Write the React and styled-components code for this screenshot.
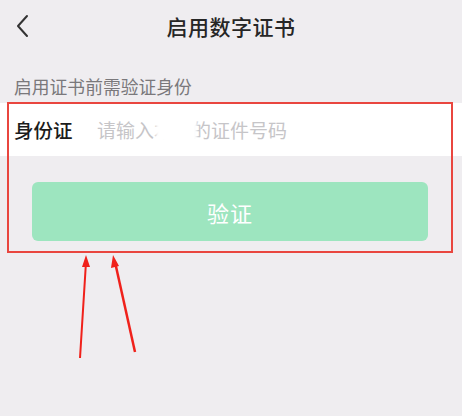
import React from "react";
import styled, {createGlobalStyle} from "styled-components";

const GlobalStyle = createGlobalStyle`
	html, body {
		margin: 0;
		padding: 0;
		background: #efedf0;
		font-family: "Noto Sans CJK SC", "Noto Sans", sans-serif;
	}
`;

const Page = styled.div`
	position: relative;
	width: 462px;
	height: 416px;
	overflow: hidden;
	background: #efedf0;
`;

const Header = styled.div`
	position: relative;
	height: 52px;
	display: flex;
	align-items: center;
	justify-content: center;
`;

const Back = styled.button`
	position: absolute;
	left: 12px;
	top: 12px;
	width: 20px;
	height: 28px;
	padding: 0;
	border: none;
	background: none;
	display: flex;
	align-items: center;
	justify-content: center;
`;

const Title = styled.h1`
	margin: 0;
	font-size: 21px;
	font-weight: 500;
	color: #262626;
	letter-spacing: 0.5px;
`;

const Hint = styled.div`
	height: 51px;
	box-sizing: border-box;
	padding: 22px 0 0 14px;
	font-size: 17.8px;
	color: #7a787b;
	line-height: 24px;
`;

const Field = styled.div`
	height: 53px;
	background: #ffffff;
	display: flex;
	align-items: center;
	padding-left: 14px;
`;

const Label = styled.span`
	width: 83px;
	flex-shrink: 0;
	font-size: 19.5px;
	font-weight: 500;
	color: #1c1c1c;
`;

const InputWrap = styled.div`
	position: relative;
	flex: 1;
`;

const Input = styled.input`
	width: 100%;
	border: none;
	outline: none;
	padding: 0;
	background: transparent;
	font-family: inherit;
	font-size: 19px;
	color: #1c1c1c;
	&::placeholder {
		color: #c6c5c8;
	}
`;

const Mask = styled.div`
	position: absolute;
	left: 59px;
	top: 2px;
	width: 41px;
	height: 24px;
	background: #ffffff;
	filter: blur(1.5px);
	border-radius: 4px;
`;

const Actions = styled.div`
	padding: 26px 34px 0 32px;
`;

const Submit = styled.button`
	width: 100%;
	height: 59px;
	border: none;
	border-radius: 6px;
	background: #9de5bf;
	color: #ffffff;
	font-family: inherit;
	font-size: 22px;
	letter-spacing: 1px;
`;

const Highlight = styled.div`
	position: absolute;
	left: 7px;
	top: 102px;
	width: 446px;
	height: 151px;
	box-sizing: border-box;
	border: 2px solid #e9463f;
	pointer-events: none;
`;

const Arrows = styled.svg`
	position: absolute;
	left: 0;
	top: 0;
	pointer-events: none;
`;

function App() {
	return (
		<Page>
			<GlobalStyle />
			<Header>
				<Back aria-label="返回">
					<svg width="14" height="24" viewBox="0 0 14 24">
						<path d="M12 2 L3 12 L12 22" fill="none" stroke="#333" strokeWidth="2" strokeLinecap="round" strokeLinejoin="round" />
					</svg>
				</Back>
				<Title>启用数字证书</Title>
			</Header>
			<Hint>启用证书前需验证身份</Hint>
			<Field>
				<Label>身份证</Label>
				<InputWrap>
					<Input placeholder="请输入本人的证件号码" />
					<Mask />
				</InputWrap>
			</Field>
			<Actions>
				<Submit>验证</Submit>
			</Actions>
			<Highlight />
			<Arrows width="462" height="416" viewBox="0 0 462 416">
				<path d="M80 358 L86 262" stroke="#f0211b" strokeWidth="2" fill="none" />
				<path d="M86 255 L82 267 L90 267 Z" fill="#f0211b" />
				<path d="M135 352 L115 262" stroke="#f0211b" strokeWidth="2.5" fill="none" />
				<path d="M113 255 L111 268 L119 266 Z" fill="#f0211b" />
			</Arrows>
		</Page>
	);
}

export default App;
